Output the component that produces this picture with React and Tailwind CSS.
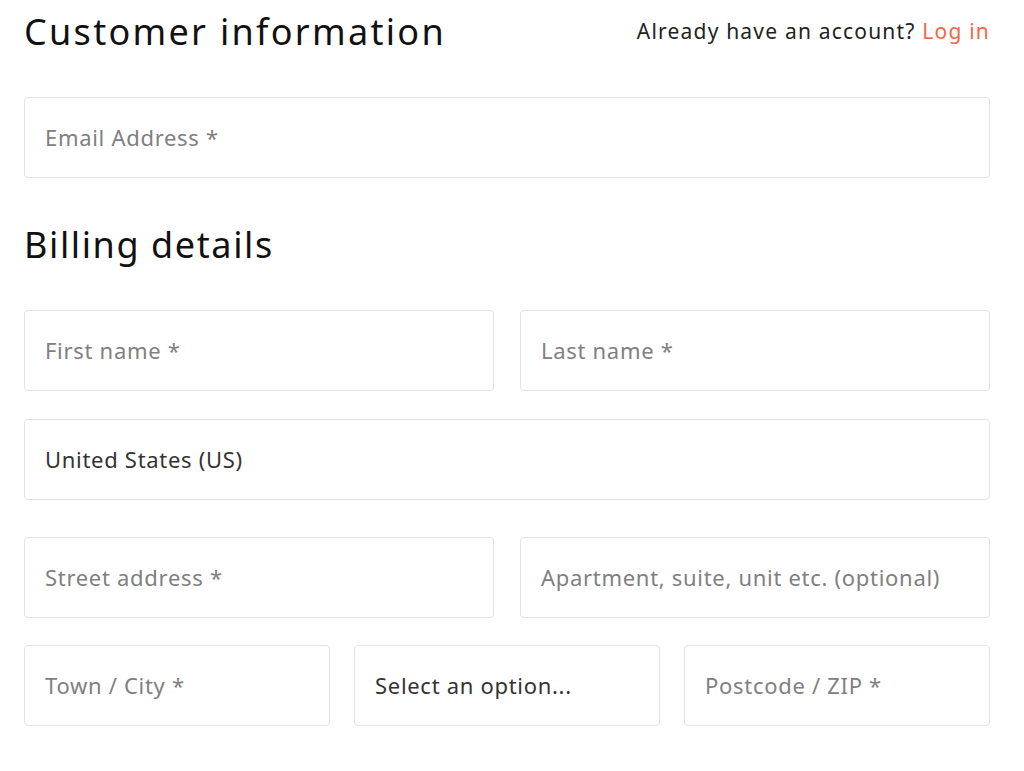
import React from "react";

const Field = ({ label, value, className = "" }) => (
  <div
    className={`h-[81px] flex items-center px-[20px] border border-[#e3e3e3] rounded-[4px] bg-white text-[22px] tracking-[0.7px] whitespace-nowrap overflow-hidden ${
      value ? "text-[#333]" : "text-[#808080]"
    } ${className}`}
  >
    {value || label}
  </div>
);

const App = () => {
  return (
    <div
      className="w-[1024px] h-[771px] bg-white px-[24px] pr-[34px] overflow-hidden"
      style={{ fontFamily: '"Noto Sans", "Open Sans", sans-serif' }}
    >
      <header className="flex justify-between items-center h-[64px]">
        <h1 className="text-[36px] text-[#111] tracking-[2.3px]">Customer information</h1>
        <p className="text-[21px] text-[#222] tracking-[1.2px]">
          Already have an account? <span className="text-[#f06a4a]">Log in</span>
        </p>
      </header>
      <div className="mt-[33px]">
        <Field label="Email Address *" />
      </div>
      <h2 className="text-[36px] text-[#111] tracking-[1.6px] mt-[42px] h-[50px] flex items-center">Billing details</h2>
      <div className="mt-[40px] grid grid-cols-2 gap-[26px]">
        <Field label="First name *" />
        <Field label="Last name *" />
      </div>
      <div className="mt-[28px]">
        <Field value="United States (US)" />
      </div>
      <div className="mt-[37px] grid grid-cols-2 gap-[26px]">
        <Field label="Street address *" />
        <Field label="Apartment, suite, unit etc. (optional)" />
      </div>
      <div className="mt-[27px] grid grid-cols-3 gap-[24px]">
        <Field label="Town / City *" />
        <Field value="Select an option..." />
        <Field label="Postcode / ZIP *" />
      </div>
    </div>
  );
};

export default App;
